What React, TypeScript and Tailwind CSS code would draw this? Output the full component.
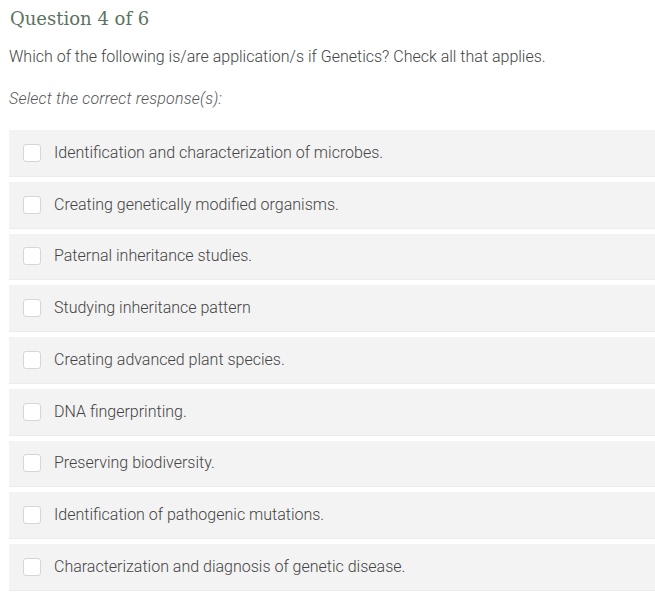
import { useState } from "react";

const options = [
  "Identification and characterization of microbes.",
  "Creating genetically modified organisms.",
  "Paternal inheritance studies.",
  "Studying inheritance pattern",
  "Creating advanced plant species.",
  "DNA fingerprinting.",
  "Preserving biodiversity.",
  "Identification of pathogenic mutations.",
  "Characterization and diagnosis of genetic disease.",
];

export default function App() {
  const [checked, setChecked] = useState<Record<number, boolean>>({});

  return (
    <div className="min-h-screen bg-white pl-[9px] font-['Roboto',sans-serif] font-light text-[#444]">
      <h2 className="pt-[5px] pl-px font-['DejaVu_Serif',serif] text-[18px] font-normal leading-[28px] text-[#5b7360]">
        Question 4 of 6
      </h2>
      <p className="mt-[14px] text-[16px] leading-[20px]">
        Which of the following is/are application/s if Genetics? Check all that applies.
      </p>
      <p className="mt-[22px] text-[16px] italic leading-[20px] tracking-[0.2px] text-[#555]">
        Select the correct response(s):
      </p>

      <ul className="mt-[21px] flex flex-col gap-[6px]">
        {options.map((text, i) => (
          <li key={i}>
            <label className="flex h-[45.75px] cursor-pointer items-center gap-[13px] bg-[#f3f3f3] pl-[14px] shadow-[0_1px_0_#ececec]">
              <input
                type="checkbox"
                className="peer sr-only"
                checked={!!checked[i]}
                onChange={() => setChecked((c) => ({ ...c, [i]: !c[i] }))}
              />
              <span className="h-[18px] w-[18px] shrink-0 rounded-[3px] border border-[#d6d6d6] bg-white" />
              <span className="text-[16px] leading-[20px]">{text}</span>
            </label>
          </li>
        ))}
      </ul>
    </div>
  );
}
